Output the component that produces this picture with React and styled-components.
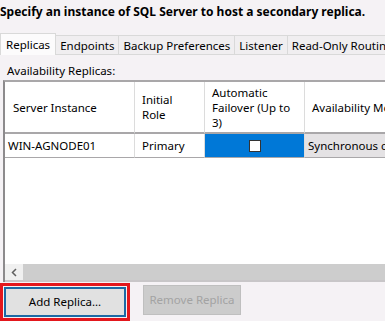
import styled, { createGlobalStyle } from "styled-components"

const Global = createGlobalStyle`
  html, body {
    margin: 0;
    padding: 0;
    background: #f5f2f5;
  }
  body {
    font-family: "Noto Sans", "Liberation Sans", sans-serif;
    font-size: 11.5px;
    color: #000;
  }
`

const Page = styled.div`
  width: 385px;
  height: 321px;
  overflow: hidden;
  display: flex;
  flex-direction: column;
`

const Title = styled.div`
  font-weight: bold;
  font-size: 12px;
  height: 33px;
  line-height: 24px;
  white-space: nowrap;
`

const TabBar = styled.div`
  display: flex;
  align-items: flex-end;
  height: 21px;
  border-bottom: 1px solid #d9d9d9;
  white-space: nowrap;
`

const Tab = styled.div`
  flex: none;
  height: ${({ active }) => (active ? "21px" : "18px")};
  line-height: ${({ active }) => (active ? "22px" : "19px")};
  padding: 0 ${({ active }) => (active ? "5px" : "4px")};
  background: ${({ active }) => (active ? "#fcfbfc" : "#f0eef0")};
  border: 1px solid #d9d9d9;
  border-bottom: none;
  margin-bottom: ${({ active }) => (active ? "-1px" : "0")};
  margin-left: ${({ first }) => (first ? "0" : "-1px")};
`

const Label = styled.div`
  padding: 8px 0 0 7px;
  height: 18px;
`

const GridFrame = styled.div`
  margin-left: 3px;
  height: 202px;
  border-top: 2px solid #a9a7a9;
  border-left: 2px solid #8d8b8d;
  background: #fff;
  display: flex;
  flex-direction: column;
`

const Table = styled.div`
  display: grid;
  grid-template-columns: 130px 70px 100px 120px;
  grid-template-rows: 52px 24px;
`

const HeadCell = styled.div`
  display: flex;
  align-items: center;
  padding: 0 7px 0 ${({ left }) => left ?? 7}px;
  border-right: 1px solid #dcdcdc;
  border-bottom: 2px solid #a9a7a9;
  line-height: 15px;
  white-space: nowrap;
  overflow: hidden;
`

const Cell = styled.div`
  display: flex;
  align-items: center;
  justify-content: ${({ center }) => (center ? "center" : "flex-start")};
  padding: 0 ${({ pad }) => pad ?? 7}px;
  background: ${({ bg }) => bg || "#fff"};
  border-right: 1px solid #dcdcdc;
  border-bottom: 1px solid #a9a7a9;
  white-space: nowrap;
  overflow: hidden;
`

const Check = styled.span`
  width: 10px;
  height: 10px;
  background: #fff;
  border: 1px solid #333;
`

const Filler = styled.div`
  flex: 1;
`

const ScrollBar = styled.div`
  height: 16px;
  display: flex;
  border-bottom: 2px solid #c8c6c8;
`

const ScrollArrow = styled.div`
  width: 18px;
  background: #f0f0f0;
  display: flex;
  align-items: center;
  justify-content: center;
`

const ScrollTrack = styled.div`
  flex: 1;
  background: #cdcdcd;
`

const ButtonRow = styled.div`
  display: flex;
  align-items: flex-start;
  gap: 13px;
  padding-top: 1px;
`

const Highlight = styled.div`
  border: 3px solid #e3171d;
  padding: 1px;
  width: 122px;
`

const Button = styled.div`
  height: ${({ disabled }) => (disabled ? "28px" : "26px")};
  line-height: ${({ disabled }) => (disabled ? "28px" : "26px")};
  text-align: center;
  width: ${({ w }) => w}px;
  background: ${({ disabled }) => (disabled ? "#cccccc" : "#e1e1e1")};
  color: ${({ disabled }) => (disabled ? "#a3a3a3" : "#000")};
  border: ${({ disabled }) => (disabled ? "1px solid #bfbfbf" : "2px solid #1b6aa5")};
  margin-top: ${({ disabled }) => (disabled ? "2px" : "0")};
`

export default function App() {
  return (
    <Page>
      <Global />
      <Title>Specify an instance of SQL Server to host a secondary replica.</Title>
      <TabBar>
        <Tab active first>Replicas</Tab>
        <Tab>Endpoints</Tab>
        <Tab>Backup Preferences</Tab>
        <Tab>Listener</Tab>
        <Tab>Read-Only Routing</Tab>
      </TabBar>
      <Label>Availability Replicas:</Label>
      <GridFrame>
        <Table>
          <HeadCell left={8}>Server Instance</HeadCell>
          <HeadCell>
            Initial
            <br />
            Role
          </HeadCell>
          <HeadCell>
            Automatic
            <br />
            Failover (Up to
            <br />
            3)
          </HeadCell>
          <HeadCell>Availability Mode</HeadCell>
          <Cell pad={3}>WIN-AGNODE01</Cell>
          <Cell>Primary</Cell>
          <Cell center bg="#0078d7">
            <Check />
          </Cell>
          <Cell pad={3} bg="#e4e2e4">Synchronous commit</Cell>
        </Table>
        <Filler />
        <ScrollBar>
          <ScrollArrow>
            <svg width="6" height="9" viewBox="0 0 6 9">
              <path d="M5 1 L1.5 4.5 L5 8" fill="none" stroke="#606060" strokeWidth="1.5" />
            </svg>
          </ScrollArrow>
          <ScrollTrack />
        </ScrollBar>
      </GridFrame>
      <ButtonRow>
        <Highlight>
          <Button w={118}>Add Replica...</Button>
        </Highlight>
        <Button disabled w={96}>Remove Replica</Button>
      </ButtonRow>
    </Page>
  )
}
